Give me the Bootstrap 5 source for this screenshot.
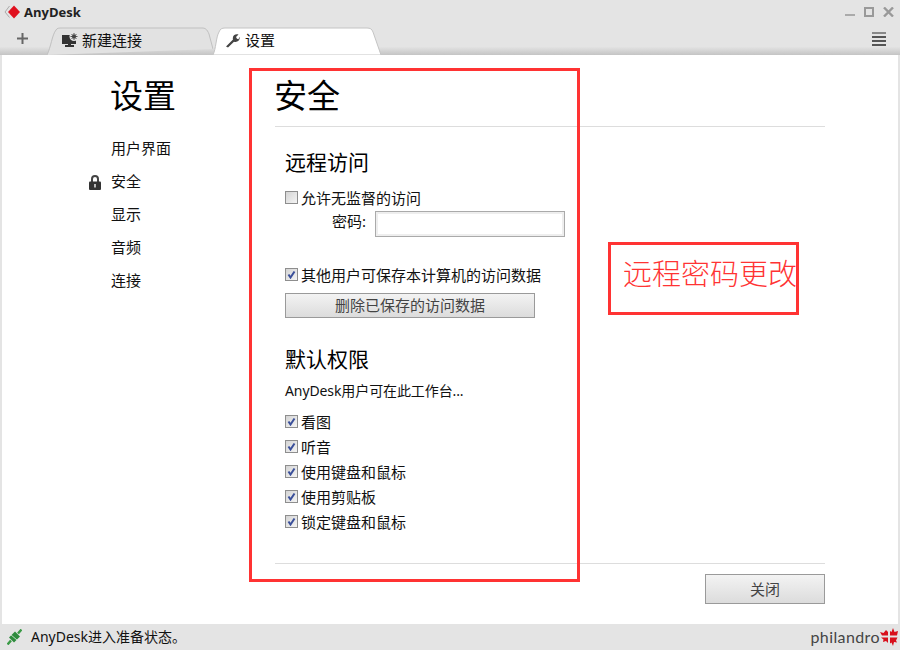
<!DOCTYPE html>
<html lang="zh"><head><meta charset="utf-8"><title>AnyDesk</title>
<link href="https://cdn.jsdelivr.net/npm/bootstrap@5.3.0/dist/css/bootstrap.min.css" rel="stylesheet">
<style>
html,body{height:650px;overflow:hidden}
body{font-family:"Noto Sans","Noto Sans CJK SC",sans-serif;font-size:15px;line-height:20px;color:#111;background:#e4e4e4}
.shell{height:650px;position:relative}
.titlebar{height:27px;padding:0 6px 3px 4px}
.brand{font-size:13px;font-weight:700;color:#222;font-family:"Open Sans","Noto Sans CJK SC",sans-serif}
.tabbar{height:28px;background:linear-gradient(#e4e4e4 70%,#c4c4c4)}
.plus{width:47px;padding:6px 0 0 17px}
.plus svg{display:block}
.tabx{width:166px;height:28px;position:relative;font-size:15px;line-height:26px}
.tabx svg.shape{position:absolute;left:0;top:0}
.tabx .lbl{position:relative;display:flex;align-items:center;height:26px}
.tab-a .lbl{padding-left:15px;gap:4px}
.tab-b .lbl{padding-left:12px;gap:5px}
.menuic{width:14px;margin:0 14px 9px 0}
.menuic i{display:block;height:2px;background:#555;margin-bottom:2px}
.menuic i:first-child{background:#888}
.pane{height:569px;background:#fff;margin:0 2px;padding-left:109px}
.leftcol{width:164px}
.bigt{font-size:33px;line-height:40px;padding-top:21px;color:#000;text-indent:-1px}
.leftnav{margin-top:16px}
.leftnav>div{height:33px;line-height:33px;position:relative}
.lockic{position:absolute;left:-22px;top:10px}
.rightcol{width:550px}
.headrule{border-bottom:1px solid #ddd;height:72px}
.secwrap{padding:0 10px}
.h3x{font-size:21px;line-height:28px;color:#000}
.chk{display:flex;align-items:center;gap:3px;height:25px;white-space:nowrap}
.box{width:13px;height:13px;border:1px solid #8e8e8e;background:linear-gradient(135deg,#d4d4d4,#f4f4f4);display:flex;align-items:center;justify-content:center;flex:none}
.pwd{display:flex;padding-left:47px;gap:9px;height:26px}
.pwdlbl{line-height:20px}
.pwdin{width:190px;height:26px;border:1px solid #aaa;box-shadow:inset 0 0 0 2px #eee;background:#fff}
.gbtn{background:linear-gradient(#f3f3f3,#dcdcdc);border:1px solid #9a9a9a;color:#444;text-align:center;font-size:15px}
.delbtn{width:250px;height:25px;line-height:23px}
.closebtn{width:120px;height:30px;line-height:28px}
.footrule{border-top:1px solid #ddd;padding-top:10px;margin-top:29px}
.statusbar{height:26px;padding:0 2px 0 7px;font-size:14px;color:#111}
.phil{font-family:"Lato","Noto Sans",sans-serif;font-size:16px;color:#444;letter-spacing:.4px}
.redbox{position:absolute;border:3px solid #f33;color:#f33}
.rb1{left:249px;top:68px;width:331px;height:514px}
.rb2{left:608px;top:242px;width:191px;height:73px;font-size:29px;line-height:58px;padding-left:12px;white-space:nowrap;font-weight:300}
.sublbl{letter-spacing:-.1px;margin-top:8px;font-size:14px}
</style></head><body>
<div class="shell">
<div class="titlebar d-flex align-items-center justify-content-between">
 <div class="d-flex align-items-center" style="gap:4px">
  <svg width="16" height="14" viewBox="0 0 16 14"><path d="M5.500 1L1 7l4.500 5.500" fill="none" stroke="#aaa"/><path d="M10 .5L16 7l-6 6.500L4 7z" fill="#e0101e"/></svg>
  <span class="brand">AnyDesk</span>
 </div>
 <div class="d-flex align-items-center" style="gap:9px">
  <svg width="10" height="10" viewBox="0 0 10 10"><rect x="0" y="7" width="10" height="2" fill="#aaa"/></svg>
  <svg width="10" height="10" viewBox="0 0 10 10"><rect x="1" y="1" width="8" height="8" fill="none" stroke="#999" stroke-width="2"/></svg>
  <svg width="11" height="10" viewBox="0 0 11 10"><path d="M1 0.5l9 9M10 0.5l-9 9" stroke="#999" stroke-width="2.4"/></svg>
 </div>
</div>
<div class="tabbar d-flex align-items-end justify-content-between">
 <div class="d-flex">
  <div class="plus"><svg width="11" height="11" viewBox="0 0 11 11"><path d="M5.500 0v11M0 5.500h11" stroke="#666" stroke-width="2"/></svg></div>
  <div class="tabx tab-a">
   <svg class="shape" width="166" height="28" viewBox="0 0 166 28"><path d="M0 28C4 20 5 8 9 3 10 1 12 1 15 1H155c3 0 5 1 7 6L166 22" fill="#e2e2e2" stroke="#c0c0c0"/></svg>
   <div class="lbl"><svg width="16" height="14" viewBox="0 0 16 14"><path d="M0 2h14v9H9v1h3v2H3v-2h3v-1H0z" fill="#333"/><circle cx="12" cy="3.500" r="4.500" fill="#e4e4e4"/><circle cx="12" cy="3.500" r="2" fill="#444"/><path d="M12 0v7M8.500 3.500h7M9.500 1l5 5M14.500 1l-5 5" stroke="#444" stroke-width=".9"/></svg><span>新建连接</span></div>
  </div>
  <div class="tabx tab-b">
   <svg class="shape" width="168" height="28" viewBox="0 0 168 28"><path d="M0 28C3 22 3 10 6 5 7 2 9 1 12 1H154c3 0 5 1 6 4L168 28z" fill="#fff" stroke="#c4c4c4"/></svg>
   <div class="lbl"><svg width="15" height="15" viewBox="0 0 15 15"><path d="M1 13.500L8 6.500C7 3 10 .5 13.500 1.500L11 4l1 1.800 1.500.4 1-2.500c1 3.500-2 6-5.500 5L3 14.500z" fill="#444"/></svg><span>设置</span></div>
  </div>
 </div>
 <div class="menuic"><i></i><i></i><i></i><i class="mb-0"></i></div>
</div>
<div class="pane d-flex">
 <div class="leftcol">
  <div class="bigt">设置</div>
  <div class="leftnav">
   <div>用户界面</div>
   <div><svg class="lockic" width="12" height="15" viewBox="0 0 12 15"><path d="M3 7V4a3 3 0 0 1 6 0v3" fill="none" stroke="#444" stroke-width="2"/><rect y="6.500" width="12" height="8.500" rx="1" fill="#333"/><rect x="5.200" y="9" width="1.600" height="3.500" fill="#ddd"/></svg>安全</div>
   <div>显示</div>
   <div>音频</div>
   <div>连接</div>
  </div>
 </div>
 <div class="rightcol">
  <div class="headrule bigt">安全</div>
  <div class="secwrap">
   <div class="h3x" style="margin-top:21px">远程访问</div>
   <div class="chk" style="margin-top:9px"><span class="box"></span>允许无监督的访问</div>
   <div class="pwd" style="margin-top:1px"><span class="pwdlbl">密码:</span><span class="pwdin"></span></div>
   <div class="chk" style="margin-top:25px"><span class="box"><svg width="9" height="9" viewBox="0 0 9 9"><path d="M1.500 4.500l2 3 4-6" fill="none" stroke="#3a4f9a" stroke-width="2"/></svg></span>其他用户可保存本计算机的访问数据</div>
   <div class="gbtn delbtn" style="margin-top:6px">删除已保存的访问数据</div>
   <div class="h3x" style="margin-top:27px">默认权限</div>
   <div class="sublbl">AnyDesk用户可在此工作台...</div>
   <div class="chk" style="margin-top:8px"><span class="box"><svg width="9" height="9" viewBox="0 0 9 9"><path d="M1.500 4.500l2 3 4-6" fill="none" stroke="#3a4f9a" stroke-width="2"/></svg></span>看图</div>
   <div class="chk"><span class="box"><svg width="9" height="9" viewBox="0 0 9 9"><path d="M1.500 4.500l2 3 4-6" fill="none" stroke="#3a4f9a" stroke-width="2"/></svg></span>听音</div>
   <div class="chk"><span class="box"><svg width="9" height="9" viewBox="0 0 9 9"><path d="M1.500 4.500l2 3 4-6" fill="none" stroke="#3a4f9a" stroke-width="2"/></svg></span>使用键盘和鼠标</div>
   <div class="chk"><span class="box"><svg width="9" height="9" viewBox="0 0 9 9"><path d="M1.500 4.500l2 3 4-6" fill="none" stroke="#3a4f9a" stroke-width="2"/></svg></span>使用剪贴板</div>
   <div class="chk"><span class="box"><svg width="9" height="9" viewBox="0 0 9 9"><path d="M1.500 4.500l2 3 4-6" fill="none" stroke="#3a4f9a" stroke-width="2"/></svg></span>锁定键盘和鼠标</div>
  </div>
  <div class="footrule d-flex justify-content-end"><div class="gbtn closebtn">关闭</div></div>
 </div>
</div>
<div class="statusbar d-flex align-items-center justify-content-between">
 <div class="d-flex align-items-center" style="gap:9px">
  <svg width="15" height="16" viewBox="0 0 15 16"><path d="M.5 15.500l3.500-4M11 4.500l3.500-4" stroke="#3a9a45" stroke-width="2.400"/><path d="M8 2.500l5 5-6 6-5-5z" fill="#2e8b3d"/><path d="M3.500 5.500L10 11" stroke="#e4f0e4" stroke-width=".8"/></svg>
  <span>AnyDesk进入准备状态。</span>
 </div>
 <div class="d-flex align-items-center">
  <span class="phil">philandro</span>
  <svg width="18" height="18" viewBox="0 0 18 18"><path d="M10 7.500V3l1.500 1L13 0l1.500 4L18 3l-1 4.500zM8 7.500H2L0 4l3.500 1L6 2l2 2zM10 9.500h7.500L16 12.500l1 2-3-.5-1 4-1.500-3.500-1.500 1zM8 9.500V15l-2-2-3 1 .5-2.500L1 9.500z" fill="#d8101c"/></svg>
 </div>
</div>
<div class="redbox rb1"></div>
<div class="redbox rb2">远程密码更改</div>
</div>
</body></html>
